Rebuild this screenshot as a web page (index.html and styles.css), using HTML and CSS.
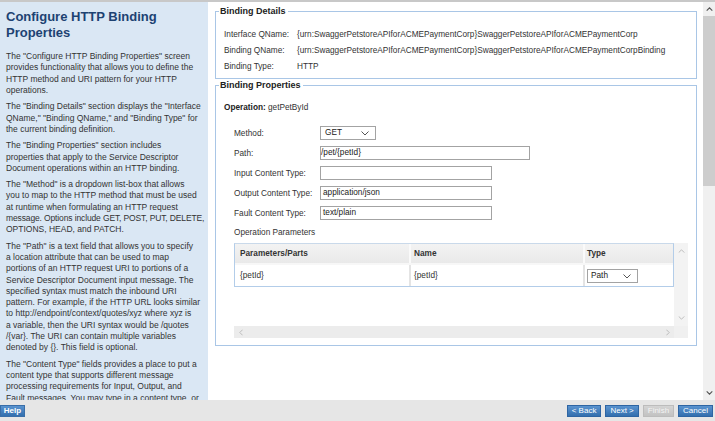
FILE: index.html
```html
<!DOCTYPE html>
<html>
<head>
<meta charset="utf-8">
<link rel="stylesheet" href="styles.css">
</head>
<body>
<div class="topline"></div>
<div class="main">
  <aside class="side">
    <h1>Configure HTTP Binding<br>Properties</h1>
    <p>The "Configure HTTP Binding Properties" screen<br>provides functionality that allows you to define the<br>HTTP method and URI pattern for your HTTP<br>operations.</p>
    <p>The "Binding Details" section displays the "Interface<br>QName," "Binding QName," and "Binding Type" for<br>the current binding definition.</p>
    <p>The "Binding Properties" section includes<br>properties that apply to the Service Descriptor<br>Document operations within an HTTP binding.</p>
    <p>The "Method" is a dropdown list-box that allows<br>you to map to the HTTP method that must be used<br>at runtime when formulating an HTTP request<br><span class="tight">message. Options include GET, POST, PUT, DELETE,</span><br>OPTIONS, HEAD, and PATCH.</p>
    <p>The "Path" is a text field that allows you to specify<br>a location attribute that can be used to map<br>portions of an HTTP request URI to portions of a<br>Service Descriptor Document input message. The<br>specified syntax must match the inbound URI<br>pattern. For example, if the HTTP URL looks similar<br>to http://endpoint/context/quotes/xyz where xyz is<br>a variable, then the URI syntax would be /quotes<br>/{var}. The URI can contain multiple variables<br>denoted by {}. This field is optional.</p>
    <p>The "Content Type" fields provides a place to put a<br>content type that supports different message<br>processing requirements for Input, Output, and<br>Fault messages. You may type in a content type, or</p>
  </aside>
  <section class="content">
    <fieldset class="box details">
      <legend>Binding Details</legend>
      <div class="kv"><span class="k">Interface QName:</span><span class="v">{urn:SwaggerPetstoreAPIforACMEPaymentCorp}SwaggerPetstoreAPIforACMEPaymentCorp</span></div>
      <div class="kv"><span class="k">Binding QName:</span><span class="v">{urn:SwaggerPetstoreAPIforACMEPaymentCorp}SwaggerPetstoreAPIforACMEPaymentCorpBinding</span></div>
      <div class="kv"><span class="k">Binding Type:</span><span class="v">HTTP</span></div>
    </fieldset>
    <fieldset class="box props">
      <legend>Binding Properties</legend>
      <div class="op"><b>Operation:</b> getPetById</div>
      <div class="form">
        <div class="row"><span class="lbl">Method:</span><div class="select method">GET<svg class="chev" viewBox="0 0 8 5"><path d="M0.5 0.5 L4 4 L7.5 0.5"/></svg></div></div>
        <div class="row"><span class="lbl">Path:</span><div class="input wide">/pet/{petId}</div></div>
        <div class="row"><span class="lbl">Input Content Type:</span><div class="input"></div></div>
        <div class="row"><span class="lbl">Output Content Type:</span><div class="input">application/json</div></div>
        <div class="row"><span class="lbl">Fault Content Type:</span><div class="input">text/plain</div></div>
      </div>
      <div class="opparams">Operation Parameters</div>
      <div class="grid">
        <div class="grid-main">
          <div class="tbl">
            <div class="tr head">
              <div class="td c1">Parameters/Parts</div>
              <div class="td c2">Name</div>
              <div class="td c3">Type</div>
            </div>
            <div class="tr">
              <div class="td c1">{petId}</div>
              <div class="td c2">{petId}</div>
              <div class="td c3"><div class="select type">Path<svg class="chev" viewBox="0 0 8 5"><path d="M0.5 0.5 L4 4 L7.5 0.5"/></svg></div></div>
            </div>
          </div>
        </div>
        <div class="grid-vs">
          <svg class="arr" viewBox="0 0 8 5"><path d="M0.5 4.5 L4 1 L7.5 4.5"/></svg>
          <svg class="arr" viewBox="0 0 8 5"><path d="M0.5 0.5 L4 4 L7.5 0.5"/></svg>
        </div>
        <div class="grid-hs">
          <svg class="harr" viewBox="0 0 5 8"><path d="M4.5 0.5 L1 4 L4.5 7.5"/></svg>
          <svg class="harr" viewBox="0 0 5 8"><path d="M0.5 0.5 L4 4 L0.5 7.5"/></svg>
        </div>
        <div class="grid-corner"></div>
      </div>
    </fieldset>
  </section>
  <div class="vscroll">
    <svg class="sarr" viewBox="0 0 8 5"><path d="M0.5 4.5 L4 1 L7.5 4.5"/></svg>
    <div class="thumb"></div>
    <div class="track"></div>
    <svg class="sarr" viewBox="0 0 8 5"><path d="M0.5 0.5 L4 4 L7.5 0.5"/></svg>
  </div>
</div>
<footer class="footer">
  <button class="btn help">Help</button>
  <div class="nav">
    <button class="btn">&lt; Back</button>
    <button class="btn">Next &gt;</button>
    <button class="btn disabled">Finish</button>
    <button class="btn">Cancel</button>
  </div>
</footer>
</body>
</html>
```

FILE: styles.css
```css
* { box-sizing: border-box; }
html, body { margin: 0; padding: 0; }
body {
  width: 715px;
  height: 421px;
  overflow: hidden;
  font-family: "Liberation Sans", Arial, sans-serif;
  color: #333;
  background: #fff;
}
.topline { height: 2px; background: #c8c8c8; }
.main { display: flex; height: 398px; }

.side {
  width: 208px;
  flex: none;
  background: #dae7f4;
  padding: 7px 0 0 6px;
  overflow: hidden;
  white-space: nowrap;
}
.side h1 {
  margin: 0 0 11px 0;
  font-size: 13px;
  line-height: 15.6px;
  font-weight: bold;
  color: #1d4272;
}
.side p {
  margin: 0 0 5px 0;
  font-size: 8.5px;
  line-height: 11.3px;
  color: #333;
}
.side .tight { letter-spacing: -0.13px; }

.content {
  flex: 1;
  padding: 4px 6px 0 7px;
  min-width: 0;
}
.box {
  border: 1px solid #a9c6e6;
  margin: 0;
  padding: 0 0 0 8px;
  min-width: 0;
}
.box legend {
  font-size: 9px;
  line-height: 11px;
  font-weight: bold;
  color: #222;
  padding: 0 2px 0 1px;
  margin-left: -5px;
}
.details { padding-top: 9px; padding-bottom: 4px; }
.kv { display: flex; height: 16px; align-items: center; font-size: 8.25px; color: #333; white-space: nowrap; }
.kv .k { width: 73px; flex: none; padding-left: 0; }

.props { margin-top: 1px; padding-top: 11px; padding-bottom: 7px; padding-right: 7px; }
.op { font-size: 8.25px; line-height: 11px; color: #333; }
.op b { color: #222; }
.form { margin-top: 10px; padding-left: 10px; }
.row { display: flex; align-items: center; height: 20px; font-size: 8.25px; }
.lbl { width: 86px; flex: none; color: #333; }
.input {
  width: 172px;
  height: 14px;
  border: 1px solid #a3a3a3;
  background: #fff;
  font-size: 8.25px;
  line-height: 12px;
  padding-left: 2px;
  color: #222;
}
.input.wide { width: 210px; padding-left: 0; }
.select {
  position: relative;
  height: 14px;
  border: 1px solid #a3a3a3;
  background: #fff;
  font-size: 8.25px;
  line-height: 12px;
  padding-left: 4px;
  color: #222;
}
.select.method { width: 56px; }
.select.type { width: 51px; padding-left: 3px; }
.chev {
  position: absolute;
  right: 6px;
  top: 4px;
  width: 8px;
  height: 5px;
  fill: none;
  stroke: #555;
  stroke-width: 1;
}
.opparams { font-size: 8.25px; line-height: 11px; margin-top: 4px; padding-left: 10px; color: #333; }

.grid {
  margin: 5px 0 0 10px;
  width: 454px;
  height: 95px;
  display: grid;
  grid-template-columns: 440px 14px;
  grid-template-rows: 83px 12px;
  background: #f3f3f3;
}
.grid-main { background: #fff; }
.tbl { border: 1px solid #b3cde9; border-top-color: #c9d9ea; }
.tr { display: flex; height: 21px; align-items: center; font-size: 8.25px; color: #333; }
.tr.head { height: 21px; background: linear-gradient(#f3f3f3, #e9e9e9); font-weight: bold; color: #333; border-bottom: 2px solid #f7f7f7; }
.td { height: 100%; display: flex; align-items: center; padding-left: 5px; }
.c1 { width: 176px; border-right: 2px solid #e4e4e4; }
.c2 { width: 174px; border-right: 2px solid #e4e4e4; padding-left: 3px; }
.c3 { flex: 1; padding-left: 2px; }
.head .c1, .head .c2 { border-right-color: #fafafa; }
.grid-vs {
  display: flex;
  flex-direction: column;
  justify-content: space-between;
  align-items: center;
  padding: 6px 0 6px;
  background: #f3f3f3;
}
.arr, .harr, .sarr { fill: none; stroke: #b0b0b0; stroke-width: 1; }
.arr { width: 7px; height: 4px; }
.grid-hs {
  display: flex;
  justify-content: space-between;
  align-items: center;
  padding: 0 4px 0 5px;
  background: #ececec;
}
.harr { width: 4px; height: 7px; }
.grid-corner { background: #f0f0f0; }

.vscroll {
  width: 12px;
  flex: none;
  display: flex;
  flex-direction: column;
  align-items: center;
  background: #f0f0f0;
  margin-left: auto;
}
.sarr { width: 7px; height: 4px; stroke: #555; stroke-width: 1.4; margin: 5px 0; }
.thumb { width: 12px; height: 170px; background: #cdcdcd; }
.track { flex: 1; }

.footer {
  height: 21px;
  background: #e6e6e6;
  display: flex;
  align-items: center;
  justify-content: space-between;
  padding: 0 2px 0 0;
}
.btn {
  font-family: "Liberation Sans", Arial, sans-serif;
  font-size: 8px;
  line-height: 10px;
  height: 12px;
  padding: 0 4px;
  border: 1px solid #2e65a3;
  background: linear-gradient(#5a93cf, #336fae);
  color: #fff;
  margin: 0;
}
.btn.help { font-weight: bold; width: 25px; padding: 0; border-color: #3a6ea8; }
.nav { display: flex; gap: 4px; }
.btn.disabled { background: linear-gradient(#d4d4d4, #c2c2c2); border-color: #bcbcbc; color: #f4f4f4; }
```
